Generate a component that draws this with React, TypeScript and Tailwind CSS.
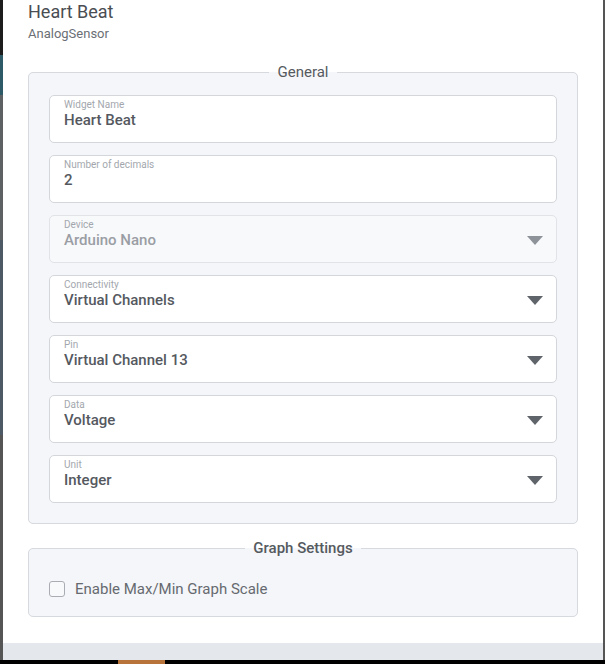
import React from 'react';

const fields = [
  { label: 'Widget Name', value: 'Heart Beat', kind: 'input' },
  { label: 'Number of decimals', value: '2', kind: 'input' },
  { label: 'Device', value: 'Arduino Nano', kind: 'select', disabled: true },
  { label: 'Connectivity', value: 'Virtual Channels', kind: 'select' },
  { label: 'Pin', value: 'Virtual Channel 13', kind: 'select' },
  { label: 'Data', value: 'Voltage', kind: 'select' },
  { label: 'Unit', value: 'Integer', kind: 'select' },
];

const Caret: React.FC<{ muted?: boolean }> = ({ muted }) => (
  <svg width="16" height="9" viewBox="0 0 16 9" className={`self-center ${muted ? 'text-[#8e939a]' : 'text-[#5f646b]'}`}>
    <path d="M0 0h16L8 9z" fill="currentColor" />
  </svg>
);

const App: React.FC = () => {
  return (
    <div className="flex h-[664px] w-[605px] flex-col bg-black font-['Roboto',sans-serif]">
      <div className="flex flex-1">
        {/* Backdrop strip */}
        <div className="flex w-[3px] flex-col">
          <div className="h-[55px] bg-[#1c1c1c]" />
          <div className="h-[40px] bg-[#2d5a66]" />
          <div className="h-[145px] bg-[#5d6163]" />
          <div className="h-[195px] bg-[#4d5a66]" />
          <div className="flex-1 bg-[#555]" />
        </div>

        <div className="flex flex-1 flex-col bg-white">
          {/* Header */}
          <div className="px-[25px]">
            <h2 className="text-[18px] leading-[24px] text-[#4a4d52]">Heart Beat</h2>
            <p className="text-[13px] leading-[19px] text-[#6b6f75]">AnalogSensor</p>
          </div>

          {/* General */}
          <fieldset className="mx-[25px] mt-[20px] rounded-[5px] border border-[#d6d9de] bg-[#f5f6f9] px-5 pb-5 pt-[14px]">
            <legend className="mx-auto px-2 text-[15px] leading-[18px] text-[#555a60]">General</legend>
            <div className="flex flex-col gap-3">
              {fields.map(f => (
                <div
                  key={f.label}
                  className={`flex h-12 items-start rounded-[5px] border pl-[14px] pr-[13px] pt-[3px] ${f.disabled ? 'bg-[#f8f9fb] border-[#e0e3e7]' : 'bg-white border-[#d3d6db]'}`}
                >
                  <div className="flex flex-1 flex-col">
                    <span className="text-[10px] leading-[12px] text-[#a3a7ad]">{f.label}</span>
                    <span className={`text-[15px] font-medium leading-[19px] ${f.disabled ? 'text-[#9a9ea4]' : 'text-[#55595f]'}`}>{f.value}</span>
                  </div>
                  {f.kind === 'select' && <Caret muted={f.disabled} />}
                </div>
              ))}
            </div>
          </fieldset>

          {/* Graph Settings */}
          <fieldset className="mx-[25px] mt-[15px] h-[78px] rounded-[5px] border border-[#d6d9de] bg-[#f5f6f9] px-5">
            <legend className="mx-auto px-2 text-[15px] font-medium leading-[18px] text-[#555a60]">Graph Settings</legend>
            <label className="mt-[23px] flex items-center gap-[10px]">
              <span className="h-[16px] w-[16px] rounded-[3px] border border-[#a9adb3] bg-[#f8f9fb]" />
              <span className="text-[15px] leading-[18px] text-[#666a70]">Enable Max/Min Graph Scale</span>
            </label>
          </fieldset>

          <div className="flex-1" />
          {/* Footer */}
          <div className="h-[17px] bg-[#e4e7eb]" />
        </div>

        <div className="w-[2px] bg-[#555]" />
      </div>
      <div className="flex h-[4px] bg-black">
        <div className="ml-[118px] w-[47px] bg-[#b8733a]" />
      </div>
    </div>
  );
};

export default App;
